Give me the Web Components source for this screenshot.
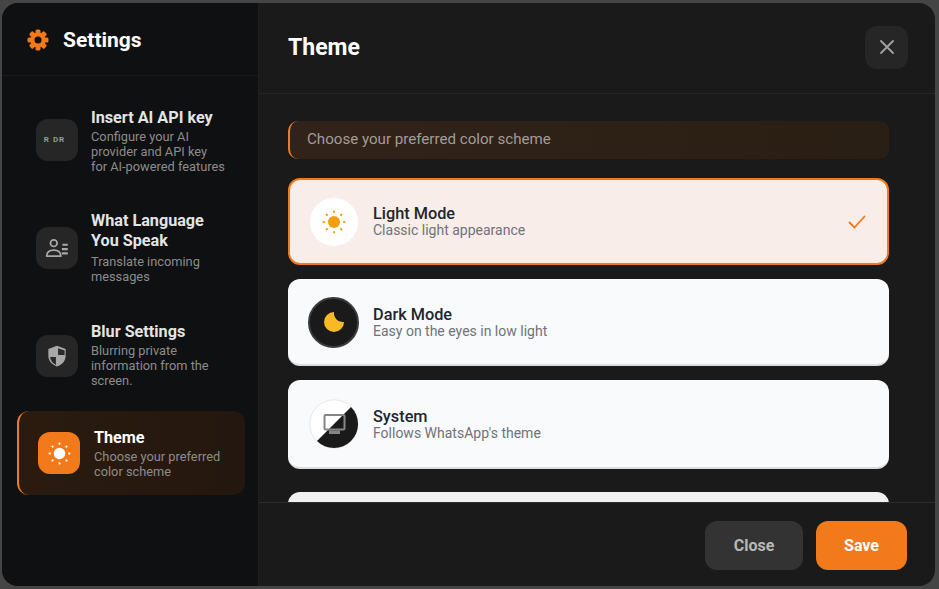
<!DOCTYPE html>
<html lang="en">
<head>
<meta charset="utf-8">
<title>Settings</title>
<style>
  html, body { margin: 0; height: 100%; background: #454545; overflow: hidden; }
  body { font-family: Roboto, "Liberation Sans", sans-serif; }
</style>
</head>
<body>
<settings-dialog>
  <settings-sidebar slot="sidebar" heading="Settings">
    <nav-item heading="Insert AI API key" style="--h:84px;--title-gap:1px;--pad-top:2px">
      <span slot="icon" class="rdr">R DR</span>
      Configure your AI<br>provider and API key<br>for AI-powered features
    </nav-item>
    <nav-item heading="What Language You Speak" style="--h:104px;--pad-bottom:1px">
      <svg slot="icon" width="28" height="28" viewBox="0 0 26 26" fill="none" stroke="#a8a8a8" stroke-width="1.6">
        <circle cx="10" cy="8.5" r="3.1"/>
        <path d="M3.5 20.5c0-4 2.8-5.6 6.5-5.6s6.5 1.600 6.500 5.600z"/>
        <path d="M18 10h5M17.500 14h5.500M17.500 18h5.500" stroke-width="2"/>
      </svg>
      Translate incoming<br>messages
    </nav-item>
    <nav-item heading="Blur Settings" style="--h:83px;--title-gap:1px;--pad-bottom:2px">
      <svg slot="icon" width="26" height="26" viewBox="0 0 24 24">
        <path d="M12 2.500l8 3v6c0 5-3.400 8.600-8 10.200-4.600-1.600-8-5.200-8-10.200v-6z" fill="#a8a8a8"/>
        <path d="M13 4.800l6 2.200v4H13zM11 13v7.300c-2.900-1.300-5-3.900-5.400-7.300z" fill="#2a2a2a"/>
      </svg>
      Blurring private<br>information from the<br>screen.
    </nav-item>
    <nav-item heading="Theme" active style="--h:84px;--title-gap:1px">
      <sun-icon slot="icon" size="23" color="#fff"></sun-icon>
      Choose your preferred<br>color scheme
    </nav-item>
  </settings-sidebar>

  <span slot="title">Theme</span>

  <info-banner>Choose your preferred color scheme</info-banner>
  <theme-option heading="Light Mode" note="Classic light appearance" selected style="--h:87px">
    <span slot="icon" class="c-light"><sun-icon size="24" color="#f59e0b"></sun-icon></span>
  </theme-option>
  <theme-option heading="Dark Mode" note="Easy on the eyes in low light" style="--h:87px;--text-top:2px">
    <span slot="icon" class="c-dark">
      <svg width="24" height="24" viewBox="0 0 24 24"><path d="M12 2A10 10 0 1 0 22 12A9 9 0 0 1 12 2z" fill="#f7b924"/></svg>
    </span>
  </theme-option>
  <theme-option heading="System" note="Follows WhatsApp's theme" style="--h:89px;--title-lh:16px;--text-top:2px">
    <span slot="icon" class="c-sys">
      <svg width="50" height="50" viewBox="0 0 50 50">
        <circle cx="25" cy="25" r="24.200" fill="#fff" stroke="#e6e7e8" stroke-width="1"/>
        <path d="M42 8A24 24 0 0 1 8 42z" fill="#1a1a1a"/>
        <rect x="15.500" y="16" width="20" height="14.500" rx="1" fill="none" stroke="#858585" stroke-width="2"/>
        <path d="M20 31.500h11v3.500H20z" fill="#858585"/>
      </svg>
    </span>
  </theme-option>
  <theme-option blank style="--h:87px;--gap:23px"></theme-option>

  <dialog-button slot="actions">Close</dialog-button>
  <dialog-button slot="actions" primary>Save</dialog-button>
</settings-dialog>

<script>
class SettingsDialog extends HTMLElement {
  constructor() {
    super();
    this.attachShadow({ mode: 'open' });
    this.shadowRoot.innerHTML = `
      <style>
        :host { display: flex; height: 583px; width: 933px; margin: 3px 0 0 2px; border-radius: 16px; overflow: hidden; background: #1a1a1a; color: #fff; }
        main { flex: 1; min-width: 0; display: flex; flex-direction: column; }
        header { height: 91px; box-sizing: border-box; display: flex; align-items: center; justify-content: space-between; padding: 0 27px 2px 29px; border-bottom: 1px solid #262626; font-size: 23px; font-weight: 700; }
        .x { width: 43px; height: 43px; border-radius: 12px; background: #262626; display: flex; align-items: center; justify-content: center; }
        .scroll { height: 408px; overflow: hidden; box-sizing: border-box; padding: 27px 46px 0 29px; }
        footer { flex: 1; border-top: 1px solid #2c2c2c; display: flex; justify-content: flex-end; gap: 13px; padding: 18px 28px 0 0; }
      </style>
      <slot name="sidebar"></slot>
      <main>
        <header>
          <slot name="title"></slot>
          <span class="x">
            <svg width="16" height="16" viewBox="0 0 16 16" stroke="#a3a3a3" stroke-width="1.800" stroke-linecap="round"><path d="M2 2l12 12M14 2L2 14"/></svg>
          </span>
        </header>
        <div class="scroll"><slot></slot></div>
        <footer><slot name="actions"></slot></footer>
      </main>`;
  }
}

class SettingsSidebar extends HTMLElement {
  constructor() {
    super();
    this.attachShadow({ mode: 'open' });
    this.shadowRoot.innerHTML = `
      <style>
        :host { display: flex; flex-direction: column; width: 257px; flex: none; box-sizing: border-box; background: #0f1011; border-right: 1px solid #1f1f1f; }
        .top { height: 73px; box-sizing: border-box; display: flex; align-items: center; gap: 14px; padding: 2px 0 0 25px; border-bottom: 1px solid #1c1c1c; font-size: 21px; font-weight: 700; }
        nav { display: flex; flex-direction: column; gap: 14px; padding: 22px 13px 0 15px; }
        svg { display: block; }
      </style>
      <div class="top">
        <svg width="22" height="22" viewBox="0 0 22 22">
          <g fill="#f27a1a">
            <rect x="8.500" y="0.500" width="5" height="21" rx="1.500"/>
            <rect x="8.500" y="0.500" width="5" height="21" rx="1.500" transform="rotate(45 11 11)"/>
            <rect x="8.500" y="0.500" width="5" height="21" rx="1.500" transform="rotate(90 11 11)"/>
            <rect x="8.500" y="0.500" width="5" height="21" rx="1.500" transform="rotate(135 11 11)"/>
            <circle cx="11" cy="11" r="7.500"/>
          </g>
          <circle cx="11" cy="11" r="3.500" fill="#0f1011"/>
        </svg>
        <span class="name"></span>
      </div>
      <nav><slot></slot></nav>`;
    this.shadowRoot.querySelector('.name').textContent = this.getAttribute('heading');
  }
}

class NavItem extends HTMLElement {
  constructor() {
    super();
    this.attachShadow({ mode: 'open' });
    this.shadowRoot.innerHTML = `
      <style>
        :host { display: flex; align-items: center; gap: 13px; box-sizing: border-box; height: var(--h); padding: 0 16px 0 17px; border-radius: 12px; border-left: 2px solid transparent; font: 12.8px/15px Roboto, sans-serif; color: #8c8c8c; }
        :host([active]) { gap: 14px; padding-left: 19px; border-left-color: #f27a1a; background: linear-gradient(90deg, #2b1b0f, #24170f); }
        .icon { width: 42px; height: 42px; flex: none; border-radius: 12px; background: #262626; display: flex; align-items: center; justify-content: center; }
        :host([active]) .icon { background: #f27a1a; }
        h3 { margin: 0 0 var(--title-gap, 3px); font: 700 16.200px/20px Roboto, sans-serif; color: #e4e4e4; }
        :host([active]) h3 { color: #fff; }
        .text { min-width: 0; padding: var(--pad-top, 0) 0 var(--pad-bottom, 0); }
        ::slotted(.rdr) { margin-right: 5px; font: 700 8px/1 Roboto, sans-serif; letter-spacing: 1px; color: #999; }
      </style>
      <span class="icon"><slot name="icon"></slot></span>
      <div class="text"><h3></h3><slot></slot></div>`;
    this.shadowRoot.querySelector('h3').textContent = this.getAttribute('heading');
  }
}

class SunIcon extends HTMLElement {
  constructor() {
    super();
    this.attachShadow({ mode: 'open' });
    const size = this.getAttribute('size') || 24;
    const color = this.getAttribute('color') || '#fff';
    const rays = [0, 45, 90, 135, 180, 225, 270, 315]
      .map(a => `<rect x="11" y="0.600" width="2" height="2.400" rx=".8" transform="rotate(${a} 12 12)"/>`).join('');
    this.shadowRoot.innerHTML = `
      <style>:host { display: block; line-height: 0; } svg { display: block; }</style>
      <svg width="${size}" height="${size}" viewBox="0 0 24 24" fill="${color}"><circle cx="12" cy="12" r="6"/>${rays}</svg>`;
  }
}

class InfoBanner extends HTMLElement {
  constructor() {
    super();
    this.attachShadow({ mode: 'open' });
    this.shadowRoot.innerHTML = `
      <style>
        :host { display: flex; align-items: center; box-sizing: border-box; height: 38px; padding: 0 0 2px 17px; border-left: 2px solid #f27a1a; border-radius: 10px; background: linear-gradient(90deg, #31231a, #2d2015 60%, #2a1f14); color: #a39d97; font: 15.120px Roboto, sans-serif; }
      </style>
      <slot></slot>`;
  }
}

class ThemeOption extends HTMLElement {
  constructor() {
    super();
    this.attachShadow({ mode: 'open' });
    this.shadowRoot.innerHTML = `
      <style>
        :host { display: flex; align-items: center; box-sizing: border-box; height: var(--h); margin-top: var(--gap, 14px); padding: 0 20px; gap: 14px; border-radius: 12px; background: #f9fafb; border-bottom: 2px solid #dcdddf; }
        :host([selected]) { margin-top: 19px; background: #f8ede8; border: 2px solid #f27a1a; padding-left: 18px; }
        :host([blank]) { background: #f1f1f1; }
        .icon { width: 51px; height: 51px; flex: none; display: flex; align-items: center; justify-content: center; }
        .text { flex: 1; padding-top: var(--text-top, 0); color: #6f737a; font: 14px/16px Roboto, sans-serif; }
        b { display: block; font: 500 16.300px/var(--title-lh, 17px) Roboto, sans-serif; color: #22262c; }
        svg { display: block; }
        ::slotted(.c-light), ::slotted(.c-dark), ::slotted(.c-sys) { display: flex; align-items: center; justify-content: center; border-radius: 50%; box-sizing: border-box; }
        ::slotted(.c-light) { width: 48px; height: 48px; background: #fff; }
        ::slotted(.c-dark) { width: 51px; height: 51px; margin-top: 1px; background: #1a1a1a; border: 2px solid #3a3a3a; }
        ::slotted(.c-sys) { width: 50px; height: 50px; }
      </style>
      <span class="icon"><slot name="icon"></slot></span>
      <div class="text"><b></b><span class="note"></span></div>
      <svg class="tick" width="20" height="16" viewBox="0 0 20 16" fill="none" stroke="#f27a1a" stroke-width="1.800" stroke-linecap="round" stroke-linejoin="round"><path d="M2.500 8.500l5 5 10-11"/></svg>`;
    const root = this.shadowRoot;
    root.querySelector('b').textContent = this.getAttribute('heading') || '';
    root.querySelector('.note').textContent = this.getAttribute('note') || '';
    if (!this.hasAttribute('selected')) root.querySelector('.tick').remove();
  }
}

class DialogButton extends HTMLElement {
  constructor() {
    super();
    this.attachShadow({ mode: 'open' });
    this.shadowRoot.innerHTML = `
      <style>
        :host { display: flex; align-items: center; justify-content: center; box-sizing: border-box; height: 49px; width: 98px; border-radius: 12px; background: #333; color: #b8b8b8; font: 700 16px Roboto, sans-serif; }
        :host([primary]) { width: 91px; background: #f27a1a; color: #fff; }
      </style>
      <slot></slot>`;
  }
}

customElements.define('settings-dialog', SettingsDialog);
customElements.define('settings-sidebar', SettingsSidebar);
customElements.define('nav-item', NavItem);
customElements.define('sun-icon', SunIcon);
customElements.define('info-banner', InfoBanner);
customElements.define('theme-option', ThemeOption);
customElements.define('dialog-button', DialogButton);
</script>
</body>
</html>
